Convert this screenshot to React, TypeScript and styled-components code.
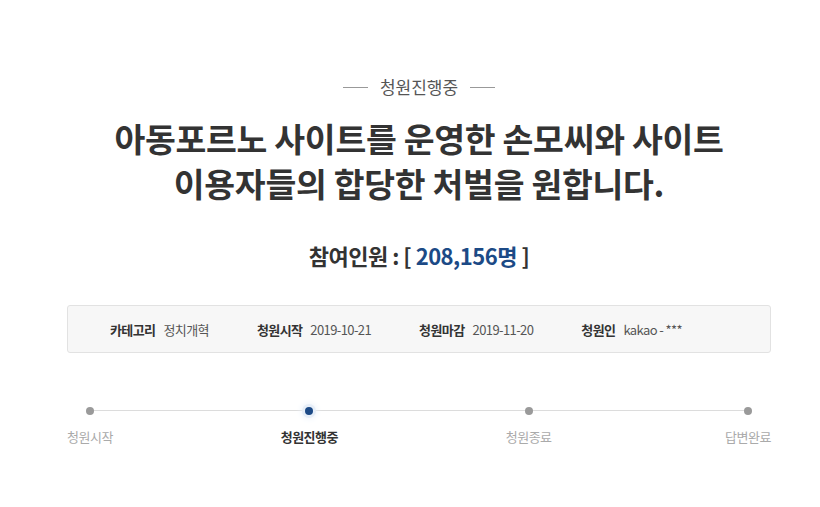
import styled, { createGlobalStyle } from "styled-components";

const GlobalStyle = createGlobalStyle`
  html, body {
    margin: 0;
    padding: 0;
    background: #fff;
  }
  body {
    font-family: "Noto Sans CJK KR", "Noto Sans", sans-serif;
    color: #333;
  }
`;

const info = [
  { label: "카테고리", value: "정치개혁" },
  { label: "청원시작", value: "2019-10-21" },
  { label: "청원마감", value: "2019-11-20" },
  { label: "청원인", value: "kakao - ***" },
];

const steps = [
  { name: "청원시작", active: false },
  { name: "청원진행중", active: true },
  { name: "청원종료", active: false },
  { name: "답변완료", active: false },
];

export default function App() {
  return (
    <Page>
      <GlobalStyle />
      <Status>청원진행중</Status>
      <Title>
        아동포르노 사이트를 운영한 손모씨와 사이트
        <br />
        이용자들의 합당한 처벌을 원합니다.
      </Title>
      <Count>
        참여인원 : [ <Num>208,156명</Num> ]
      </Count>
      <InfoBox>
        {info.map((item) => (
          <InfoItem key={item.label}>
            <InfoLabel>{item.label}</InfoLabel>
            <InfoValue>{item.value}</InfoValue>
          </InfoItem>
        ))}
      </InfoBox>
      <Steps>
        {steps.map((s) => (
          <Step key={s.name}>
            <Dot $active={s.active} />
            <StepName $active={s.active}>{s.name}</StepName>
          </Step>
        ))}
      </Steps>
    </Page>
  );
}

const Page = styled.main`
  width: 820px;
  height: 507px;
  box-sizing: border-box;
  padding-top: 77px;
  padding-left: 18px;
  display: flex;
  flex-direction: column;
  align-items: center;
`;

const Status = styled.div`
  display: flex;
  align-items: center;
  gap: 12px;
  font-size: 17px;
  line-height: 20px;
  color: #555;

  &::before,
  &::after {
    content: "";
    width: 25px;
    height: 1px;
    background: #999;
  }
`;

const Title = styled.h1`
  margin: 18px 0 0;
  font-size: 33.5px;
  line-height: 45px;
  font-weight: 700;
  letter-spacing: -0.3px;
  text-align: center;
  color: #333;
`;

const Count = styled.div`
  margin-top: 36px;
  font-size: 22px;
  line-height: 28px;
  font-weight: 700;
  color: #333;
  letter-spacing: -0.5px;
`;

const Num = styled.span`
  color: #1c4a86;
`;

const InfoBox = styled.div`
  margin-top: 36px;
  width: 704px;
  height: 48px;
  box-sizing: border-box;
  padding-left: 42px;
  display: flex;
  align-items: center;
  gap: 48px;
  background: #f7f7f7;
  border: 1px solid #e2e2e2;
  border-radius: 3px;
`;

const InfoItem = styled.div`
  display: flex;
  align-items: center;
  gap: 8px;
  font-size: 13px;
  letter-spacing: -0.6px;
`;

const InfoLabel = styled.span`
  font-weight: 700;
  color: #333;
`;

const InfoValue = styled.span`
  color: #555;
`;

const Steps = styled.div`
  position: relative;
  margin-top: 53px;
  width: 704px;
  display: flex;
  justify-content: space-between;

  &::before {
    content: "";
    position: absolute;
    left: 23px;
    right: 23px;
    top: 4px;
    height: 1px;
    background: #dcdcdc;
  }
`;

const Step = styled.div`
  width: 46px;
  display: flex;
  flex-direction: column;
  align-items: center;
  position: relative;
`;

const Dot = styled.span<{ $active: boolean }>`
  width: 8px;
  height: 8px;
  border-radius: 50%;
  margin-top: 1px;
  background: ${(p) => (p.$active ? "#1c4a86" : "#9a9a9a")};
  box-shadow: ${(p) =>
    p.$active ? "0 0 0 3px #e6eef8, 0 0 6px 4px #eef4fb" : "none"};
`;

const StepName = styled.span<{ $active: boolean }>`
  margin-top: 13px;
  white-space: nowrap;
  font-size: 13px;
  line-height: 18px;
  letter-spacing: -0.5px;
  font-weight: ${(p) => (p.$active ? 700 : 400)};
  color: ${(p) => (p.$active ? "#333" : "#aaa")};
`;
